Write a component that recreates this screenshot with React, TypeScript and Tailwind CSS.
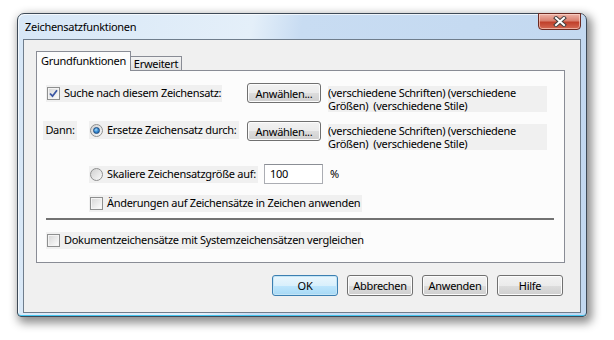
import React from 'react';

const font = "font-['Noto_Sans',sans-serif] text-[11px] tracking-[-0.3px]";

function CheckBox({ checked = false }: { checked?: boolean }) {
  return (
    <span className="flex h-[13px] w-[13px] shrink-0 items-center justify-center border border-[#8e8f8f] bg-white">
      <span className="flex h-[11px] w-[11px] items-center justify-center border border-[#f4f4f4] bg-gradient-to-br from-[#d9d9d9] to-[#fbfbfb]">
        {checked && (
          <svg width="9" height="9" viewBox="0 0 9 9">
            <path d="M1 4.5 L3.5 7.2 L8 1.2" fill="none" stroke="#3b56a3" strokeWidth="1.8" />
          </svg>
        )}
      </span>
    </span>
  );
}

function Radio({ checked = false }: { checked?: boolean }) {
  return (
    <span className="flex h-[13px] w-[13px] shrink-0 items-center justify-center rounded-full border border-[#8e8f8f] bg-gradient-to-br from-[#d0d0d0] to-[#fafafa]">
      {checked && (
        <span className="h-[7px] w-[7px] rounded-full border border-[#1d4a7e] bg-[radial-gradient(circle_at_40%_35%,#a9dcf8_0%,#3a8fd6_45%,#1a5ea8_100%)]" />
      )}
    </span>
  );
}

function Btn({ children, w = 'w-[66px]', h = 'h-[21px]', def = false }: { children: React.ReactNode; w?: string; h?: string; def?: boolean }) {
  return (
    <div
      className={`${w} ${h} flex shrink-0 items-center justify-center whitespace-nowrap rounded-[3px] border leading-none text-black ${
        def
          ? 'border-[#3c7fb1] bg-[linear-gradient(#eaf6fd_0%,#d9f0fc_50%,#bee6fd_51%,#a7d9f5_100%)] shadow-[inset_0_0_0_1px_#c4e5f6]'
          : 'border-[#707070] bg-[linear-gradient(#f2f2f2_0%,#ebebeb_50%,#dddddd_51%,#cfcfcf_100%)] shadow-[inset_0_0_0_1px_#fcfcfc]'
      }`}
    >
      {children}
    </div>
  );
}

function Band({ children, w, className = '' }: { children: React.ReactNode; w: string; className?: string }) {
  return (
    <div className={`${w} flex h-[17px] shrink-0 items-center gap-[4px] whitespace-nowrap bg-[#f0f0f0] ${className}`}>
      {children}
    </div>
  );
}

function Desc() {
  return (
    <div className="mt-[3px] h-[26px] w-[219px] shrink-0 whitespace-nowrap bg-[#f0f0f0] leading-[13px]">
      <div className="h-[13px]">(verschiedene Schriften) (verschiedene</div>
      <div className="h-[13px]">Größen)&nbsp; (verschiedene Stile)</div>
    </div>
  );
}

export default function App() {
  return (
    <div className={`h-[340px] w-[614px] overflow-hidden bg-white pl-[17px] pt-[13px] text-black ${font}`}>
      <div className="flex h-[304px] w-[570px] flex-col rounded-t-[7px] rounded-b-[4px] border border-[#3e4a57] bg-[linear-gradient(100deg,#d7e7f7_0%,#e4eff9_38%,#c8dcf2_46%,#c2d8f0_100%)] shadow-[inset_0_-1px_0_#45c6f0,inset_1px_1px_0_rgba(255,255,255,0.7),3px_4px_10px_2px_rgba(0,0,0,0.45)]">
        {/* title bar */}
        <div className="flex h-[25px] shrink-0 items-start justify-between pl-[7px]">
          <span className="mt-[5px] leading-[15px]">Zeichensatzfunktionen</span>
          <div className="mr-[5px] mt-[-1px] flex h-[17px] w-[43px] items-center justify-center rounded-b-[4px] border border-[#6b2a22] bg-[linear-gradient(#eeb3a8_0%,#d9806f_45%,#c0402b_55%,#d46a55_100%)] shadow-[inset_0_0_0_1px_rgba(255,220,210,0.6)]">
            <svg width="14" height="11" viewBox="0 0 14 11">
              <path d="M3 2 L11 9 M11 2 L3 9" stroke="#44403f" strokeWidth="4" strokeLinecap="square" />
              <path d="M3 2 L11 9 M11 2 L3 9" stroke="#ffffff" strokeWidth="2" strokeLinecap="square" />
            </svg>
          </div>
        </div>

        {/* client area */}
        <div className="mx-[5px] h-[274px] border border-[#6f7d8c] bg-[#f0f0f0] pl-[12px] pr-[17px] pt-[11px]">
          {/* tabs */}
          <div className="flex h-[19px] items-end">
            <div className="relative z-10 mb-[-1px] flex h-[20px] w-[95px] items-center justify-center border border-b-0 border-[#898c95] bg-[#fcfcfc]">
              Grundfunktionen
            </div>
            <div className="flex h-[14px] w-[51px] items-center justify-center border border-b-0 border-l-0 border-[#898c95] bg-[linear-gradient(#f3f3f3,#e1e1e1)] pt-[1px]">
              Erweitert
            </div>
          </div>

          {/* panel */}
          <div className="flex h-[193px] w-[529px] flex-col border border-[#898c95] bg-[#fcfcfc] pl-[9px]">
            {/* row 1 */}
            <div className="mt-[12px] flex h-[38px] items-start">
              <Band w="w-[176px]" className="mt-[2px] pl-[1px]">
                <CheckBox checked />
                <span>Suche nach diesem Zeichensatz:</span>
              </Band>
              <div className="ml-[25px]">
                <Btn w="w-[74px]" h="h-[20px]">Anwählen...</Btn>
              </div>
              <div className="ml-[7px]">
                <Desc />
              </div>
            </div>

            {/* row 2 */}
            <div className="flex h-[43px] items-start">
              <div className="ml-[-3px] flex h-[19px] w-[34px] items-center justify-center bg-[#f0f0f0]">Dann:</div>
              <Band w="w-[150px]" className="ml-[12px] h-[18px] pl-[1px]">
                <Radio checked />
                <span>Ersetze Zeichensatz durch:</span>
              </Band>
              <div className="ml-[8px]">
                <Btn w="w-[74px]" h="h-[20px]">Anwählen...</Btn>
              </div>
              <div className="ml-[7px]">
                <Desc />
              </div>
            </div>

            {/* row 3 */}
            <div className="flex h-[31px] items-start pl-[43px]">
              <Band w="w-[169px]" className="mt-[2px] pl-[1px]">
                <Radio />
                <span>Skaliere Zeichensatzgröße auf:</span>
              </Band>
              <div className="ml-[6px] flex h-[20px] w-[59px] items-center border border-[#abadb3] border-t-[#8b8e95] bg-white pl-[5px]">100</div>
              <div className="ml-[7px] flex h-[20px] items-center">%</div>
            </div>

            {/* row 4 */}
            <div className="flex h-[17px] pl-[43px]">
              <Band w="w-[273px]" className="pl-[1px]">
                <CheckBox />
                <span>Änderungen auf Zeichensätze in Zeichen anwenden</span>
              </Band>
            </div>

            {/* separator */}
            <div className="mt-[6px] h-[2px] w-[508px] bg-[#727272]" />

            {/* row 5 */}
            <div className="mt-[12px] flex">
              <Band w="w-[315px]" className="pl-[1px]">
                <CheckBox />
                <span>Dokumentzeichensätze mit Systemzeichensätzen vergleichen</span>
              </Band>
            </div>
          </div>

          {/* buttons */}
          <div className="mt-[12px] flex justify-end gap-[9px]">
            <Btn def>OK</Btn>
            <Btn>Abbrechen</Btn>
            <Btn>Anwenden</Btn>
            <Btn>Hilfe</Btn>
          </div>
        </div>
      </div>
    </div>
  );
}
